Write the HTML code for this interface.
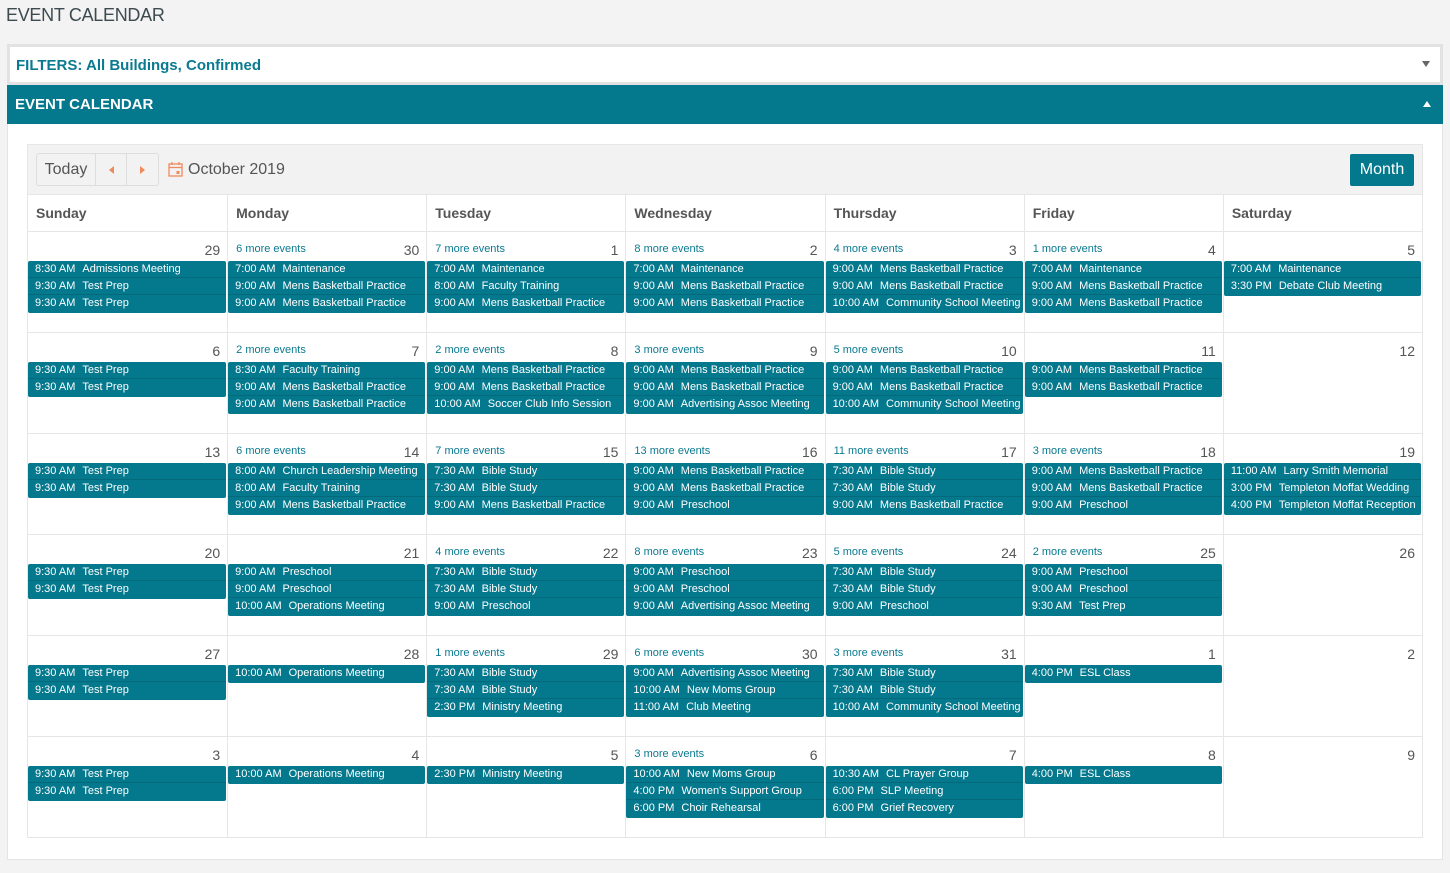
<!DOCTYPE html><html><head><meta charset="utf-8"><style>
*{box-sizing:border-box;margin:0;padding:0}
body{width:1450px;height:873px;background:#f3f3f3;font-family:"Liberation Sans",sans-serif;position:relative;overflow:hidden;color:#555}
.title{position:absolute;left:6px;top:5px;font-size:18px;color:#3d4a4f;letter-spacing:-.3px}
.filt{position:absolute;left:7px;top:44px;width:1436px;height:41px;background:#fff;border:3px solid #e2e2e2;border-bottom-width:3px}
.filt span{position:absolute;left:6px;top:10px;font-size:15px;font-weight:bold;color:#0a7a90}
.filt i{position:absolute;right:10px;top:14px;width:0;height:0;border-left:4px solid transparent;border-right:4px solid transparent;border-top:6px solid #666}
.hdr{position:absolute;left:7px;top:85px;width:1436px;height:39px;background:#04788d;color:#fff;font-size:15px;font-weight:bold}
.hdr span{position:absolute;left:8px;top:11px}
.hdr i{position:absolute;right:12px;top:16px;width:0;height:0;border-left:4px solid transparent;border-right:4px solid transparent;border-bottom:6px solid #fff}
.panel{position:absolute;left:7px;top:124px;width:1436px;height:736px;background:#fff;border:1px solid #e4e4e4;border-top:0}
.cal{position:absolute;left:27px;top:144px;width:1396px;height:694px;border:1px solid #e6e6e6;background:#fff}
.tb{height:50px;background:#f2f2f2;position:relative;border-bottom:1px solid #e6e6e6}
.btns{position:absolute;left:8px;top:8px;height:33px;border:1px solid #ddd;border-radius:3px;display:flex;background:#f2f2f2}
.btns div{height:31px;line-height:31px;font-size:16px;color:#555;border-right:1px solid #ddd;text-align:center}
.btns div:last-child{border:0}
.tri{display:inline-block;width:0;height:0;border-top:4px solid transparent;border-bottom:4px solid transparent;vertical-align:middle}
.mon{position:absolute;left:160px;top:16px;font-size:16px;color:#555}
.month{position:absolute;right:8px;top:9px;width:64px;height:32px;background:#04788d;color:#fff;font-size:16px;line-height:31px;text-align:center;border-radius:2px}
.dh{display:grid;grid-template-columns:repeat(7,1fr);height:37px;border-bottom:1px solid #e6e6e6}
.dh div{border-left:1px solid #e6e6e6;font-size:14px;font-weight:bold;color:#555;padding:10px 0 0 8px}
.dh div:first-child{border-left:0}
.w{display:grid;grid-template-columns:repeat(7,1fr);height:101px;border-bottom:1px solid #e6e6e6}
.c{position:relative;border-left:1px solid #e6e6e6}
.c:first-child{border-left:0}
.n{position:absolute;right:7px;top:10px;font-size:14px;color:#555}
.m{position:absolute;left:8px;top:11px;font-size:11px;color:#0a7a90}
.ev{position:absolute;left:0;right:1px;top:29px;background:#04788d;border-radius:2px;padding-bottom:1px}
.e{height:17px;line-height:16px;color:#fff;font-size:11px;padding-left:7px;border-bottom:1px solid rgba(0,0,0,.12);white-space:nowrap;overflow:hidden}
.e:last-child{border-bottom:0}
.e b{font-weight:normal;margin-right:7px}
</style></head><body>
<div class="title">EVENT CALENDAR</div>
<div class="filt"><span>FILTERS: All Buildings, Confirmed</span><i></i></div>
<div class="hdr"><span>EVENT CALENDAR</span><i></i></div>
<div class="panel"></div>
<div class="cal">
<div class="tb">
<div class="btns"><div style="width:59px">Today</div><div style="width:31px"><span class="tri" style="border-right:5px solid #f08a5d"></span></div><div style="width:31px"><span class="tri" style="border-left:5px solid #f08a5d"></span></div></div>
<svg style="position:absolute;left:140px;top:17px" width="15" height="15" viewBox="0 0 15 15"><rect x="1" y="2" width="13" height="12" fill="none" stroke="#f08a5d" stroke-width="1.3"/><line x1="1" y1="5.5" x2="14" y2="5.5" stroke="#f08a5d" stroke-width="1.3"/><line x1="4" y1="0" x2="4" y2="3" stroke="#f08a5d" stroke-width="1.3"/><line x1="11" y1="0" x2="11" y2="3" stroke="#f08a5d" stroke-width="1.3"/><rect x="8.5" y="9" width="3" height="3" fill="#f08a5d"/></svg>
<div class="mon">October 2019</div>
<div class="month">Month</div>
</div>
<div class="dh"><div>Sunday</div><div>Monday</div><div>Tuesday</div><div>Wednesday</div><div>Thursday</div><div>Friday</div><div>Saturday</div></div>

<div class="w">
<div class="c"><span class="n">29</span><div class="ev"><div class="e"><b>8:30 AM</b>Admissions Meeting</div><div class="e"><b>9:30 AM</b>Test Prep</div><div class="e"><b>9:30 AM</b>Test Prep</div></div></div>
<div class="c"><span class="m">6 more events</span><span class="n">30</span><div class="ev"><div class="e"><b>7:00 AM</b>Maintenance</div><div class="e"><b>9:00 AM</b>Mens Basketball Practice</div><div class="e"><b>9:00 AM</b>Mens Basketball Practice</div></div></div>
<div class="c"><span class="m">7 more events</span><span class="n">1</span><div class="ev"><div class="e"><b>7:00 AM</b>Maintenance</div><div class="e"><b>8:00 AM</b>Faculty Training</div><div class="e"><b>9:00 AM</b>Mens Basketball Practice</div></div></div>
<div class="c"><span class="m">8 more events</span><span class="n">2</span><div class="ev"><div class="e"><b>7:00 AM</b>Maintenance</div><div class="e"><b>9:00 AM</b>Mens Basketball Practice</div><div class="e"><b>9:00 AM</b>Mens Basketball Practice</div></div></div>
<div class="c"><span class="m">4 more events</span><span class="n">3</span><div class="ev"><div class="e"><b>9:00 AM</b>Mens Basketball Practice</div><div class="e"><b>9:00 AM</b>Mens Basketball Practice</div><div class="e"><b>10:00 AM</b>Community School Meeting</div></div></div>
<div class="c"><span class="m">1 more events</span><span class="n">4</span><div class="ev"><div class="e"><b>7:00 AM</b>Maintenance</div><div class="e"><b>9:00 AM</b>Mens Basketball Practice</div><div class="e"><b>9:00 AM</b>Mens Basketball Practice</div></div></div>
<div class="c"><span class="n">5</span><div class="ev"><div class="e"><b>7:00 AM</b>Maintenance</div><div class="e"><b>3:30 PM</b>Debate Club Meeting</div></div></div>
</div>

<div class="w">
<div class="c"><span class="n">6</span><div class="ev"><div class="e"><b>9:30 AM</b>Test Prep</div><div class="e"><b>9:30 AM</b>Test Prep</div></div></div>
<div class="c"><span class="m">2 more events</span><span class="n">7</span><div class="ev"><div class="e"><b>8:30 AM</b>Faculty Training</div><div class="e"><b>9:00 AM</b>Mens Basketball Practice</div><div class="e"><b>9:00 AM</b>Mens Basketball Practice</div></div></div>
<div class="c"><span class="m">2 more events</span><span class="n">8</span><div class="ev"><div class="e"><b>9:00 AM</b>Mens Basketball Practice</div><div class="e"><b>9:00 AM</b>Mens Basketball Practice</div><div class="e"><b>10:00 AM</b>Soccer Club Info Session</div></div></div>
<div class="c"><span class="m">3 more events</span><span class="n">9</span><div class="ev"><div class="e"><b>9:00 AM</b>Mens Basketball Practice</div><div class="e"><b>9:00 AM</b>Mens Basketball Practice</div><div class="e"><b>9:00 AM</b>Advertising Assoc Meeting</div></div></div>
<div class="c"><span class="m">5 more events</span><span class="n">10</span><div class="ev"><div class="e"><b>9:00 AM</b>Mens Basketball Practice</div><div class="e"><b>9:00 AM</b>Mens Basketball Practice</div><div class="e"><b>10:00 AM</b>Community School Meeting</div></div></div>
<div class="c"><span class="n">11</span><div class="ev"><div class="e"><b>9:00 AM</b>Mens Basketball Practice</div><div class="e"><b>9:00 AM</b>Mens Basketball Practice</div></div></div>
<div class="c"><span class="n">12</span></div>
</div>

<div class="w">
<div class="c"><span class="n">13</span><div class="ev"><div class="e"><b>9:30 AM</b>Test Prep</div><div class="e"><b>9:30 AM</b>Test Prep</div></div></div>
<div class="c"><span class="m">6 more events</span><span class="n">14</span><div class="ev"><div class="e"><b>8:00 AM</b>Church Leadership Meeting</div><div class="e"><b>8:00 AM</b>Faculty Training</div><div class="e"><b>9:00 AM</b>Mens Basketball Practice</div></div></div>
<div class="c"><span class="m">7 more events</span><span class="n">15</span><div class="ev"><div class="e"><b>7:30 AM</b>Bible Study</div><div class="e"><b>7:30 AM</b>Bible Study</div><div class="e"><b>9:00 AM</b>Mens Basketball Practice</div></div></div>
<div class="c"><span class="m">13 more events</span><span class="n">16</span><div class="ev"><div class="e"><b>9:00 AM</b>Mens Basketball Practice</div><div class="e"><b>9:00 AM</b>Mens Basketball Practice</div><div class="e"><b>9:00 AM</b>Preschool</div></div></div>
<div class="c"><span class="m">11 more events</span><span class="n">17</span><div class="ev"><div class="e"><b>7:30 AM</b>Bible Study</div><div class="e"><b>7:30 AM</b>Bible Study</div><div class="e"><b>9:00 AM</b>Mens Basketball Practice</div></div></div>
<div class="c"><span class="m">3 more events</span><span class="n">18</span><div class="ev"><div class="e"><b>9:00 AM</b>Mens Basketball Practice</div><div class="e"><b>9:00 AM</b>Mens Basketball Practice</div><div class="e"><b>9:00 AM</b>Preschool</div></div></div>
<div class="c"><span class="n">19</span><div class="ev"><div class="e"><b>11:00 AM</b>Larry Smith Memorial</div><div class="e"><b>3:00 PM</b>Templeton Moffat Wedding</div><div class="e"><b>4:00 PM</b>Templeton Moffat Reception</div></div></div>
</div>

<div class="w">
<div class="c"><span class="n">20</span><div class="ev"><div class="e"><b>9:30 AM</b>Test Prep</div><div class="e"><b>9:30 AM</b>Test Prep</div></div></div>
<div class="c"><span class="n">21</span><div class="ev"><div class="e"><b>9:00 AM</b>Preschool</div><div class="e"><b>9:00 AM</b>Preschool</div><div class="e"><b>10:00 AM</b>Operations Meeting</div></div></div>
<div class="c"><span class="m">4 more events</span><span class="n">22</span><div class="ev"><div class="e"><b>7:30 AM</b>Bible Study</div><div class="e"><b>7:30 AM</b>Bible Study</div><div class="e"><b>9:00 AM</b>Preschool</div></div></div>
<div class="c"><span class="m">8 more events</span><span class="n">23</span><div class="ev"><div class="e"><b>9:00 AM</b>Preschool</div><div class="e"><b>9:00 AM</b>Preschool</div><div class="e"><b>9:00 AM</b>Advertising Assoc Meeting</div></div></div>
<div class="c"><span class="m">5 more events</span><span class="n">24</span><div class="ev"><div class="e"><b>7:30 AM</b>Bible Study</div><div class="e"><b>7:30 AM</b>Bible Study</div><div class="e"><b>9:00 AM</b>Preschool</div></div></div>
<div class="c"><span class="m">2 more events</span><span class="n">25</span><div class="ev"><div class="e"><b>9:00 AM</b>Preschool</div><div class="e"><b>9:00 AM</b>Preschool</div><div class="e"><b>9:30 AM</b>Test Prep</div></div></div>
<div class="c"><span class="n">26</span></div>
</div>

<div class="w">
<div class="c"><span class="n">27</span><div class="ev"><div class="e"><b>9:30 AM</b>Test Prep</div><div class="e"><b>9:30 AM</b>Test Prep</div></div></div>
<div class="c"><span class="n">28</span><div class="ev"><div class="e"><b>10:00 AM</b>Operations Meeting</div></div></div>
<div class="c"><span class="m">1 more events</span><span class="n">29</span><div class="ev"><div class="e"><b>7:30 AM</b>Bible Study</div><div class="e"><b>7:30 AM</b>Bible Study</div><div class="e"><b>2:30 PM</b>Ministry Meeting</div></div></div>
<div class="c"><span class="m">6 more events</span><span class="n">30</span><div class="ev"><div class="e"><b>9:00 AM</b>Advertising Assoc Meeting</div><div class="e"><b>10:00 AM</b>New Moms Group</div><div class="e"><b>11:00 AM</b>Club Meeting</div></div></div>
<div class="c"><span class="m">3 more events</span><span class="n">31</span><div class="ev"><div class="e"><b>7:30 AM</b>Bible Study</div><div class="e"><b>7:30 AM</b>Bible Study</div><div class="e"><b>10:00 AM</b>Community School Meeting</div></div></div>
<div class="c"><span class="n">1</span><div class="ev"><div class="e"><b>4:00 PM</b>ESL Class</div></div></div>
<div class="c"><span class="n">2</span></div>
</div>

<div class="w">
<div class="c"><span class="n">3</span><div class="ev"><div class="e"><b>9:30 AM</b>Test Prep</div><div class="e"><b>9:30 AM</b>Test Prep</div></div></div>
<div class="c"><span class="n">4</span><div class="ev"><div class="e"><b>10:00 AM</b>Operations Meeting</div></div></div>
<div class="c"><span class="n">5</span><div class="ev"><div class="e"><b>2:30 PM</b>Ministry Meeting</div></div></div>
<div class="c"><span class="m">3 more events</span><span class="n">6</span><div class="ev"><div class="e"><b>10:00 AM</b>New Moms Group</div><div class="e"><b>4:00 PM</b>Women's Support Group</div><div class="e"><b>6:00 PM</b>Choir Rehearsal</div></div></div>
<div class="c"><span class="n">7</span><div class="ev"><div class="e"><b>10:30 AM</b>CL Prayer Group</div><div class="e"><b>6:00 PM</b>SLP Meeting</div><div class="e"><b>6:00 PM</b>Grief Recovery</div></div></div>
<div class="c"><span class="n">8</span><div class="ev"><div class="e"><b>4:00 PM</b>ESL Class</div></div></div>
<div class="c"><span class="n">9</span></div>
</div>
</div>
</body></html>
